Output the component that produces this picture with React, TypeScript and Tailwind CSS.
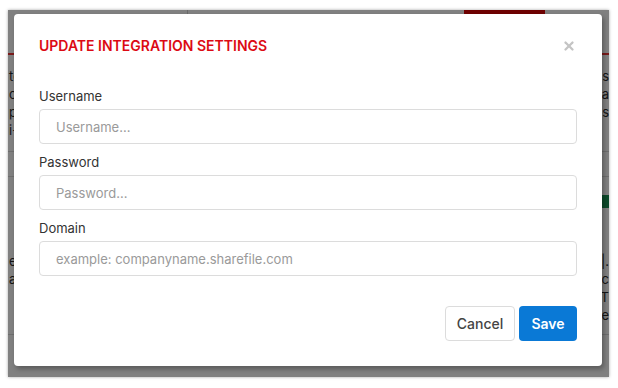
import { X } from "lucide-react"

const font = { fontFamily: "Inter, 'Noto Sans', sans-serif" }

const Field = ({ label, placeholder }: { label: string; placeholder: string }) => (
    <div className="flex flex-col gap-[5px]">
        <label className="text-[13px] leading-[16px] text-[#333]">{label}</label>
        <input
            type="text"
            placeholder={placeholder}
            className="h-[35px] w-full rounded-[4px] border border-[#dcdcdc] px-[16px] text-[13px] text-[#333] outline-none placeholder:text-[#9a9a9a]"
        />
    </div>
)

// dimmed page behind the dialog
const BackgroundPage = () => (
    <div className="flex h-full flex-col text-[13px] leading-[18px] text-[#141414]">
        <div className="flex h-[4px]">
            <div className="w-[180px] border-r border-[#6a6a6a]" />
            <div className="w-[276px]" />
            <div className="w-[81px] bg-[#6e0000]" />
        </div>
        <div className="mt-[39px] h-[2px] bg-[#7a1a1a]" />
        <div className="flex justify-between pt-[12px]">
            <div className="flex flex-col pl-[1px]">
                <span>to</span>
                <span>op</span>
                <span>pr</span>
                <span>i-</span>
            </div>
            <div className="flex flex-col text-right">
                <span>ss</span>
                <span>aa</span>
                <span>ss</span>
            </div>
        </div>
        <div className="mt-[12px] h-px bg-[#6e6e6e]" />
        <div className="mt-[24px] h-px bg-[#6e6e6e]" />
        <div className="mt-[18px] flex justify-end">
            <div className="h-[13px] w-[16px] bg-[#0c4a2a] text-[10px] leading-[13px] text-[#7fa08a]">D</div>
        </div>
        <div className="flex justify-between pt-[44px]">
            <div className="flex flex-col pl-[1px]">
                <span>en</span>
                <span>ar</span>
            </div>
            <div className="flex flex-col text-right">
                <span>r|.</span>
                <span>c</span>
                <span>T</span>
                <span>e</span>
            </div>
        </div>
        <div className="mt-[10px] h-px bg-[#6e6e6e]" />
    </div>
)

const App = () => {
    return (
        <div className="h-[388px] w-[618px] overflow-hidden bg-white pl-[8px] pt-[10px]" style={font}>
            <div className="relative h-[367px] w-[601px] overflow-hidden bg-[#808080] shadow-[0_0_3px_rgba(0,0,0,0.35)]">
                <BackgroundPage />
                <div className="absolute left-[6px] top-[4px] flex h-[352px] w-[588px] flex-col rounded-[4px] bg-white px-[25px] pb-[25px] pt-[22px] shadow-[2px_3px_5px_rgba(0,0,0,0.3)]">
                    <div className="flex h-[20px] items-center justify-between">
                        <h2 className="text-[14px] font-semibold leading-[20px] text-[#dc0a14]">
                            UPDATE INTEGRATION SETTINGS
                        </h2>
                        <button type="button" className="mr-[1px] text-[#c4c4c4]">
                            <X size={14} strokeWidth={4} />
                        </button>
                    </div>

                    <div className="mt-[32px] flex flex-col gap-[10px]">
                        <Field label="Username" placeholder="Username..." />
                        <Field label="Password" placeholder="Password..." />
                        <Field label="Domain" placeholder="example: companyname.sharefile.com" />
                    </div>

                    <div className="mt-[30px] flex justify-end gap-[4px]">
                        <button
                            type="button"
                            className="h-[35px] w-[70px] rounded-[4px] border border-[#dcdcdc] bg-white text-[14px] font-medium text-[#444]"
                        >
                            Cancel
                        </button>
                        <button
                            type="button"
                            className="h-[35px] w-[58px] rounded-[4px] bg-[#0a79d6] text-[14px] font-semibold text-white"
                        >
                            Save
                        </button>
                    </div>
                </div>
            </div>
        </div>
    )
}

export default App
